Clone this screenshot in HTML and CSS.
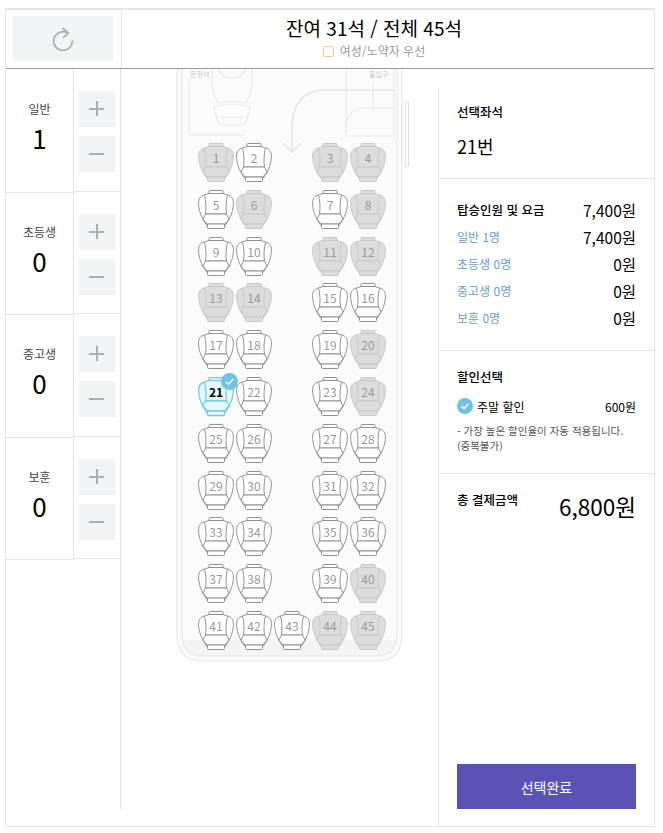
FILE: index.html
```html
<!DOCTYPE html>
<html lang="ko">
<head>
<meta charset="utf-8">
<title>좌석 선택</title>
<link rel="stylesheet" href="styles.css">
</head>
<body>
<svg class="defs" width="0" height="0" aria-hidden="true">
  <symbol id="seat" viewBox="0 0 36 40">
    <path class="s-part" d="M11 4V1.200q0-.7.7-.7h12.600q.7 0 .7.7V4"/>
    <path class="s-part" d="M6.500 5C2.500 6 .6 8.500 .6 13 .6 19 2.500 27 9 35.500H27C33.500 27 35.400 19 35.400 13 35.400 8.500 33.500 6 29.500 5L25 3.500H11z"/>
    <path class="s-part" d="M6.500 5C8 11 8.500 18 7.500 24H28.500C27.500 18 28 11 29.500 5"/>
    <path class="s-part" d="M7.500 24H28.500L31 29 27 34H9L5 29z"/>
    <path class="s-part" d="M9.500 34h17v3.500q0 1-1 1h-15q-1 0-1-1z"/>
  </symbol>
</svg>
<main class="app">
  <header class="top">
    <div class="reset-cell">
      <button class="reset" type="button" aria-label="새로고침">
        <svg width="22" height="24" viewBox="0 0 22 24"><path d="M16 6.200A9.300 9.300 0 1 0 20.300 13.500" /><path d="M10.500 1l5.800 5-5.300 5"/></svg>
      </button>
    </div>
    <div class="summary">
      <h1>잔여 31석 / 전체 45석</h1>
      <label class="pref"><span class="box"></span>여성/노약자 우선</label>
    </div>
  </header>
  <div class="body">
    <section class="counts">
      <div class="count">
        <div class="count-info"><span>일반</span><strong>1</strong></div>
        <div class="count-btns"><button class="step" type="button"><i class="h"></i><i class="v"></i></button><button class="step" type="button"><i class="h"></i></button></div>
      </div>
      <div class="count">
        <div class="count-info"><span>초등생</span><strong>0</strong></div>
        <div class="count-btns"><button class="step" type="button"><i class="h"></i><i class="v"></i></button><button class="step" type="button"><i class="h"></i></button></div>
      </div>
      <div class="count">
        <div class="count-info"><span>중고생</span><strong>0</strong></div>
        <div class="count-btns"><button class="step" type="button"><i class="h"></i><i class="v"></i></button><button class="step" type="button"><i class="h"></i></button></div>
      </div>
      <div class="count">
        <div class="count-info"><span>보훈</span><strong>0</strong></div>
        <div class="count-btns"><button class="step" type="button"><i class="h"></i><i class="v"></i></button><button class="step" type="button"><i class="h"></i></button></div>
      </div>
    </section>
    <section class="map">
      <div class="bus">
        <svg class="bus-art" width="228" height="594" viewBox="0 0 228 594">
          <path class="fill" d="M1 0V566q0 26 26 26H200q26 0 26-26V0z"/>
          <path class="floor" d="M6 571H221q-1 14-21 16H27q-20-2-21-16z"/>
          <g class="line">
            <path d="M1 0V566q0 26 26 26H200q26 0 26-26V0"/>
            <path d="M6 0V566q0 21 21 21H200q21 0 21-21V0"/>
            <path d="M218 0V72"/>
            <path d="M13 12V66M13 66H69"/>
            <path d="M36 0V14C36 22 40 30 42 34M76 0V14C76 22 72 30 70 34"/>
            <path d="M42 0C46 12 66 12 70 0M42 34Q56 30 70 34"/>
            <path d="M41 37Q56 33 71 37Q75 38 73 43L70 53Q69 56 66 56H46Q43 56 42 53L39 43Q37 38 41 37z"/>
            <path d="M44 49Q56 47 68 49"/>
            <path class="thick" d="M218 21H150Q116 21 116 60V83"/>
            <path class="thick" d="M107 74l9 9 9-9"/>
            <path d="M218 39H190Q170 39 170 59V67H216"/>
            <path d="M170 0V59M197 14V39"/>
          </g>
          <rect class="rail" x="229.500" y="33" width="3" height="64"/>
        </svg>
        <span class="bus-tag tag-l">운전석</span>
        <span class="bus-tag tag-r">출입구</span>
        <div class="seats" id="seats"></div>
      </div>
    </section>
    <aside class="side">
      <section class="block b-seat">
        <h2>선택좌석</h2>
        <p class="seat-no">21번</p>
      </section>
      <section class="block b-fare">
        <div class="fare-row"><h2>탑승인원 및 요금</h2><b>7,400원</b></div>
        <div class="fare-row"><span>일반 1명</span><b>7,400원</b></div>
        <div class="fare-row"><span>초등생 0명</span><b>0원</b></div>
        <div class="fare-row"><span>중고생 0명</span><b>0원</b></div>
        <div class="fare-row"><span>보훈 0명</span><b>0원</b></div>
      </section>
      <section class="block b-disc">
        <h2>할인선택</h2>
        <div class="disc-row">
          <span class="disc-name"><svg class="tick" width="16" height="16" viewBox="0 0 16 16"><circle cx="8" cy="8" r="8"/><path d="M4.500 8.200l2.500 2.500 4.500-5"/></svg>주말 할인</span>
          <b>600원</b>
        </div>
        <p class="note">- 가장 높은 할인율이 자동 적용됩니다.<br>(중복불가)</p>
      </section>
      <section class="block b-total">
        <div class="total-row"><h2>총 결제금액</h2><b>6,800원</b></div>
        <button class="done" type="button">선택완료</button>
      </section>
    </aside>
  </div>
</main>
<script src="seats.js"></script>
</body>
</html>
```
FILE: seats.js
```js
var taken = [1,3,4,6,8,11,12,13,14,20,24,40,44,45];
var rows = [[1,2,0,3,4],[5,6,0,7,8],[9,10,0,11,12],[13,14,0,15,16],[17,18,0,19,20],[21,22,0,23,24],[25,26,0,27,28],[29,30,0,31,32],[33,34,0,35,36],[37,38,0,39,40],[41,42,43,44,45]];
var html = '';
rows.forEach(function (row) {
  row.forEach(function (n) {
    if (!n) { html += '<div class="seat-gap"></div>'; return; }
    var cls = n === 21 ? 'seat picked' : taken.indexOf(n) > -1 ? 'seat taken' : 'seat';
    var tick = n === 21 ? '<svg class="seat-tick" width="17" height="17" viewBox="0 0 16 16"><circle cx="8" cy="8" r="8"/><path d="M4.500 8.200l2.500 2.500 4.500-5"/></svg>' : '';
    html += '<div class="' + cls + '"><svg width="36" height="40"><use href="#seat"/></svg><span>' + n + '</span>' + tick + '</div>';
  });
});
document.getElementById('seats').innerHTML = html;
```
FILE: styles.css
```css
* { box-sizing: border-box; }
html, body { margin: 0; height: 100%; }
body {
  padding: 8px 8px 6px 5px;
  background: #fff;
  color: #000;
  font-family: "Noto Sans CJK KR", "Noto Sans", sans-serif;
}
h1, h2, p { margin: 0; font-weight: 400; }
button { border: 0; padding: 0; font: inherit; cursor: pointer; }
.defs { position: absolute; }
.app { height: 819px; border: 1px solid #e5e5e5; border-top-width: 2px; display: flex; flex-direction: column; }

.top { height: 59px; display: flex; border-bottom: 1px solid #999; flex: none; }
.reset-cell { width: 116px; border-right: 1px solid #e5e5e5; padding: 6px 7px 0; }
.reset { display: flex; width: 100px; height: 45px; align-items: center; justify-content: center; background: #f2f3f5; }
.reset svg { fill: none; stroke: #a9adb8; stroke-width: 1.700; }
.summary { flex: 1; text-align: center; padding: 4px 28px 0 0; }
.summary h1 { font-size: 19px; line-height: 27px; }
.pref { display: flex; align-items: center; justify-content: center; gap: 6px; font-size: 12px; line-height: 18px; color: #999; margin-top: 1px; }
.box { width: 11px; height: 11px; border: 1px solid #fcc98a; border-radius: 2px; }

.body { flex: 1; display: flex; min-height: 0; }
.counts { width: 115px; flex: none; height: 740px; border-right: 1px solid #e5e5e5; }
.count { display: flex; height: 122.500px; }
.count-info { width: 68px; border-right: 1px solid #e5e5e5; border-bottom: 1px solid #e5e5e5; display: flex; flex-direction: column; align-items: center; padding-top: 31px; margin-bottom: -1px; }
.count-info span { font-size: 12px; line-height: 18px; color: #444; }
.count-info strong { font-size: 26px; font-weight: 400; line-height: 38px; margin-top: 1px; }
.count-btns { width: 46px; border-bottom: 1px solid #e5e5e5; display: flex; flex-direction: column; gap: 9px; padding: 22px 0 0 5px; }
.step { position: relative; width: 36px; height: 36px; background: #f2f3f5; flex: none; }
.step i { position: absolute; background: #a9adb8; }
.step .h { left: 10px; top: 17px; width: 15px; height: 2px; }
.step .v { left: 17px; top: 10px; width: 2px; height: 15px; }

.map { width: 317px; flex: none; padding-left: 55px; }
.bus { position: relative; width: 232px; height: 594px; }
.bus-art { position: absolute; left: 0; top: 0; overflow: visible; }
.bus-art .fill { fill: #fbfbfb; }
.bus-art .floor { fill: #f4f4f4; }
.bus-art .line { fill: none; stroke: #e8e8e8; stroke-width: 1.200; }
.bus-art .line .thick { stroke-width: 1.600; stroke: #e4e4e4; }
.bus-art .rail { fill: #fff; stroke: #e0e0e0; }
.bus-tag { position: absolute; top: 0; font-size: 7px; line-height: 10px; color: #c4c4c4; }
.tag-l { left: 14px; }
.tag-r { left: 193px; }
.seats { position: absolute; left: 22px; top: 74px; display: grid; grid-template-columns: repeat(5, 38px); grid-auto-rows: 46.800px; }
.seat { --seat-stroke: #929292; --seat-fill: #fff; --seat-width: 1; position: relative; width: 36px; height: 40px; }
.taken { --seat-stroke: #c8c8c8; --seat-fill: #dcdcdc; }
.picked { --seat-stroke: #7cc9e4; --seat-fill: #e6f8fe; --seat-width: 1.300; }
.s-part { stroke: var(--seat-stroke); fill: var(--seat-fill); stroke-width: var(--seat-width); }
.seat > svg:first-child { display: block; }
.seat span { position: absolute; left: 0; right: 0; top: 6px; text-align: center; font-size: 12px; line-height: 18px; color: #999; }
.picked span { color: #000; font-weight: 700; }
.seat-tick { position: absolute; right: -4px; top: -4px; }
.seat-tick circle, .tick circle { fill: #6fc2e3; }
.seat-tick path, .tick path { fill: none; stroke: #fff; stroke-width: 1.300; }

.side { flex: 1; margin-top: 17px; border-left: 1px solid #e5e5e5; display: flex; flex-direction: column; }
.block { padding: 0 18px; border-bottom: 1px solid #e5e5e5; }
.block h2 { font-size: 12.500px; line-height: 18px; font-weight: 500; }
.b-seat { height: 93px; padding-top: 17px; }
.seat-no { font-size: 18px; line-height: 27px; margin-top: 12px; }
.b-fare { height: 172px; padding-top: 17px; }
.fare-row { display: flex; justify-content: space-between; align-items: center; height: 27px; font-size: 12px; }
.fare-row span { color: #6c9bc9; }
.fare-row b { font-weight: 400; font-size: 15.500px; }
.b-disc { height: 123px; padding-top: 17px; }
.disc-row { display: flex; justify-content: space-between; align-items: center; margin-top: 10px; height: 20px; font-size: 12px; }
.disc-name { display: flex; align-items: center; gap: 4px; }
.disc-row b { font-weight: 400; }
.note { font-size: 10.500px; line-height: 15px; color: #555; margin-top: 7px; }
.b-total { flex: 1; border-bottom: 0; display: flex; flex-direction: column; justify-content: space-between; padding-top: 14px; padding-bottom: 17px; }
.total-row { display: flex; justify-content: space-between; align-items: flex-start; }
.total-row h2 { margin-top: 3px; }
.total-row b { font-weight: 400; font-size: 22.500px; line-height: 36px; }
.done { height: 45px; background: #5b52b5; color: #fff; font-size: 14px; width: 179px; }
```
